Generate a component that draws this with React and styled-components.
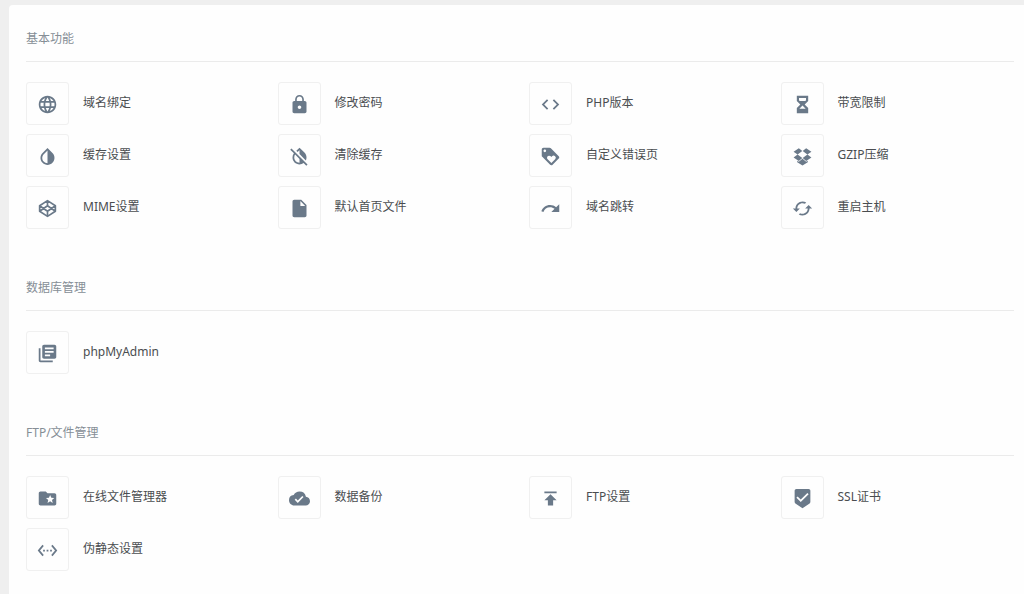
import React from "react";
import styled, { createGlobalStyle } from "styled-components";
import {
  MdLanguage,
  MdLock,
  MdCode,
  MdInvertColorsOff,
  MdLoyalty,
  MdInsertDriveFile,
  MdRedo,
  MdCached,
  MdLibraryBooks,
  MdFolderSpecial,
  MdCloudDone,
  MdPublish,
  MdBeenhere,
  MdSettingsEthernet,
} from "react-icons/md";

const GlobalStyle = createGlobalStyle`
  * { box-sizing: border-box; }
  body {
    margin: 0;
    background: #efefef;
    font-family: "Noto Sans", "Noto Sans CJK SC", sans-serif;
    font-size: 12px;
    line-height: 18px;
  }
`;

const Page = styled.div`
  min-height: 100vh;
  padding: 5px 0 0 9px;
  display: flex;
`;

const Panel = styled.main`
  flex: 1;
  min-width: 0;
  padding: 25px 10px 20px 17px;
  background: #fefefe;
  border-top-left-radius: 4px;
`;

const Section = styled.section`
  & + & {
    margin-top: 50px;
  }
`;

const Heading = styled.h2`
  margin: 0 0 20px;
  padding-bottom: 13px;
  border-bottom: 1px solid #ebebeb;
  color: #868e96;
  font-size: 12px;
  font-weight: 400;
`;

const Grid = styled.div`
  display: grid;
  grid-template-columns: repeat(4, minmax(0, 1fr));
  gap: 9px 18px;
`;

const Item = styled.a`
  display: flex;
  align-items: flex-start;
  gap: 14px;
  color: #4a4d50;
  text-decoration: none;
`;

const Tile = styled.span`
  display: flex;
  align-items: center;
  justify-content: center;
  flex: none;
  width: 43px;
  height: 43px;
  padding-top: 2px;
  border: 1px solid #f0f0f0;
  border-radius: 3px;
  color: #6a7989;

  svg {
    width: 21px;
    height: 21px;
  }
`;

const Label = styled.span`
  padding-top: 12px;
  white-space: nowrap;
`;

const InvertIcon = () => (
  <svg viewBox="0 0 24 24" fill="currentColor" aria-hidden="true">
    <path d="M17.66 7.93 12 2.27 6.34 7.93c-3.12 3.12-3.12 8.19 0 11.31C7.9 20.8 9.95 21.58 12 21.58s4.1-.78 5.66-2.34c3.12-3.12 3.12-8.19 0-11.31zM12 19.59c-1.6 0-3.11-.62-4.24-1.76C6.62 16.69 6 15.19 6 13.59s.62-3.11 1.76-4.24L12 5.1v14.49z" />
  </svg>
);

const HourglassIcon = () => (
  <svg viewBox="0 0 24 24" fill="currentColor" fillRule="evenodd" aria-hidden="true">
    <path d="M5.5 2h13v6l-4 4 4 4v6h-13v-6l4-4-4-4zM8 4.6v2.6l.8.8h6.4l.8-.8V4.6zM12 13.2 8.4 16.8h7.2z" />
  </svg>
);

const DropboxIcon = () => (
  <svg viewBox="0 0 24 24" fill="currentColor" aria-hidden="true">
    <path d="M7.8 2.6 11.8 5.8 6.4 9.7 1.8 6.5zM16.2 2.6 12.2 5.8l5.4 3.9 4.6-3.2zM6.4 9.7 1.8 13 7.8 17l4-3.2zM17.6 9.7l4.6 3.3-6 4-4-3.2zM12 14.6l-4.2 3.4L6 16.8v1.8l6 3.6 6-3.6v-1.8L16.2 18z" />
  </svg>
);

const CodepenIcon = () => (
  <svg
    viewBox="0 0 24 24"
    fill="none"
    stroke="currentColor"
    strokeWidth="1.9"
    strokeLinejoin="round"
    aria-hidden="true"
  >
    <path d="M12 3 21 8.8v6.4L12 21 3 15.2V8.8zM12 3v5.8M12 15.2V21M3 8.8l9 6.4 9-6.4M3 15.2l9-6.4 9 6.4" />
  </svg>
);

const sections = [
  {
    title: "基本功能",
    items: [
      ["域名绑定", MdLanguage],
      ["修改密码", MdLock],
      ["PHP版本", MdCode],
      ["带宽限制", HourglassIcon],
      ["缓存设置", InvertIcon],
      ["清除缓存", MdInvertColorsOff],
      ["自定义错误页", MdLoyalty],
      ["GZIP压缩", DropboxIcon],
      ["MIME设置", CodepenIcon],
      ["默认首页文件", MdInsertDriveFile],
      ["域名跳转", MdRedo],
      ["重启主机", MdCached],
    ],
  },
  {
    title: "数据库管理",
    items: [["phpMyAdmin", MdLibraryBooks]],
  },
  {
    title: "FTP/文件管理",
    items: [
      ["在线文件管理器", MdFolderSpecial],
      ["数据备份", MdCloudDone],
      ["FTP设置", MdPublish],
      ["SSL证书", MdBeenhere],
      ["伪静态设置", MdSettingsEthernet],
    ],
  },
];

export default function App() {
  return (
    <>
      <GlobalStyle />
      <Page>
        <Panel>
          {sections.map(({ title, items }) => (
            <Section key={title}>
              <Heading>{title}</Heading>
              <Grid>
                {items.map(([label, Icon]) => (
                  <Item href="#" key={label}>
                    <Tile>
                      <Icon />
                    </Tile>
                    <Label>{label}</Label>
                  </Item>
                ))}
              </Grid>
            </Section>
          ))}
        </Panel>
      </Page>
    </>
  );
}
